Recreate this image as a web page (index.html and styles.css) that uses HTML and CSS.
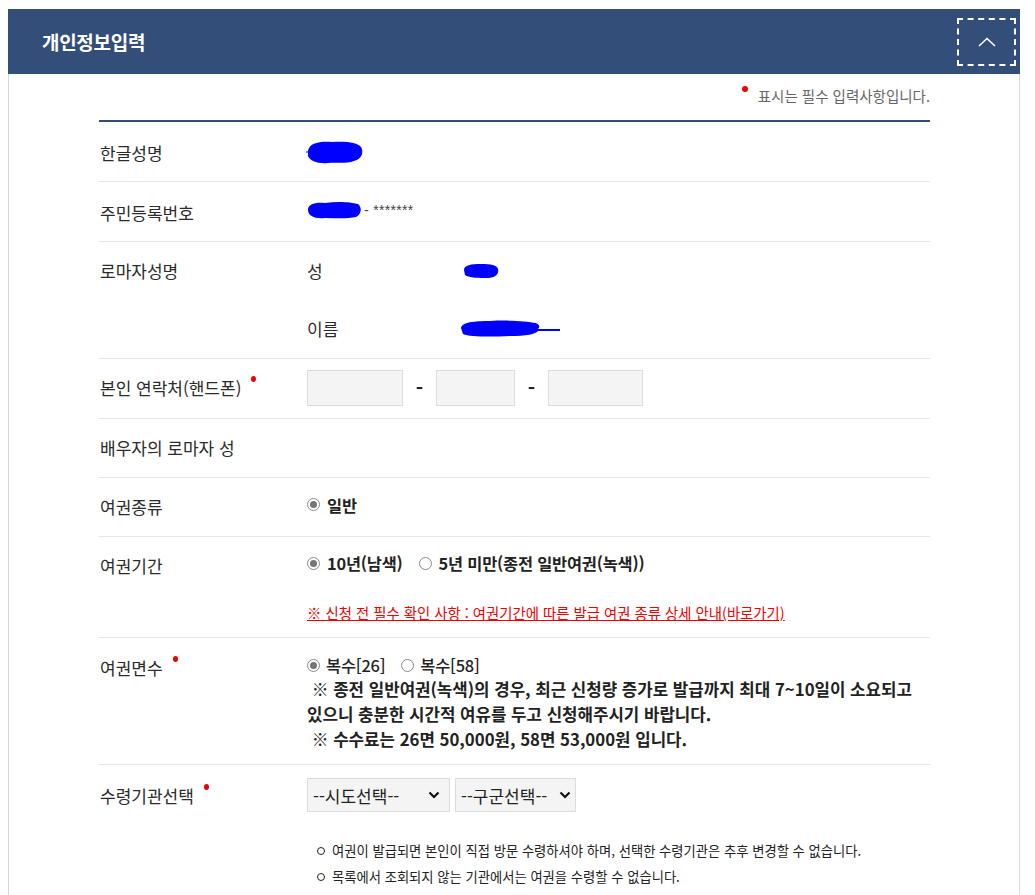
FILE: index.html
```html
<!DOCTYPE html>
<html lang="ko">
<head>
<meta charset="utf-8">
<title>개인정보입력</title>
<link rel="stylesheet" href="styles.css">
</head>
<body>
<div class="panel">
  <div class="panel-head">
    <h2 class="panel-title">개인정보입력</h2>
    <button class="fold-btn" type="button" aria-label="접기">
      <svg width="18" height="10" viewBox="0 0 18 10"><polyline points="1,9 9,1.5 17,9" fill="none" stroke="#fff" stroke-width="1.6"/></svg>
    </button>
  </div>
  <div class="panel-body">
    <p class="req-note"><span class="req-dot"></span>표시는 필수 입력사항입니다.</p>
    <div class="form-table">
      <div class="row r-name">
        <div class="label">한글성명</div>
        <div class="value line">
          <svg class="mask" width="58" height="26" viewBox="0 0 58 26"><path d="M2 12 C3 4 14 2 26 3 C38 2 52 3 55 8 C58 13 56 20 48 22 C40 25 30 23 22 24 C12 25 4 22 2 17 Z" fill="#0000ff"/><path d="M0 13 L6 13" stroke="#0000ff" stroke-width="1"/></svg>
        </div>
      </div>
      <div class="row r-jumin">
        <div class="label">주민등록번호</div>
        <div class="value line">
          <svg class="mask" width="55" height="18" viewBox="0 0 55 18"><path d="M1 9 C1 3 8 1 18 2 C30 0 44 1 51 3 C55 6 55 13 49 16 C40 18 28 17 18 17 C8 18 1 15 1 9 Z" fill="#0000ff"/></svg><span class="jumin-rest">- *******</span>
        </div>
      </div>
      <div class="row r-roman">
        <div class="label">로마자성명</div>
        <div class="value">
          <div class="sub-line">
            <span class="sub-label">성</span>
            <svg class="mask" width="36" height="16" viewBox="0 0 36 16"><path d="M1 7 C1 2 8 1 18 1 C28 1 34 2 35 6 C36 11 33 14 26 15 C16 15 6 15 2 12 Z" fill="#0000ff"/></svg>
          </div>
          <div class="sub-line second">
            <span class="sub-label">이름</span>
            <svg class="mask" width="102" height="18" viewBox="0 0 102 18"><path d="M1 8 C2 2 14 1 30 1 C48 0 66 1 76 3 C80 5 80 7 78 9 L100 9 L100 11 L78 11 C76 14 66 16 50 16 C30 17 10 17 3 14 Z" fill="#0000ff"/></svg>
          </div>
        </div>
      </div>
      <div class="row r-phone">
        <div class="label"><span class="req">본인 연락처(핸드폰)</span></div>
        <div class="value phone">
          <input class="tel w1" type="text" aria-label="휴대폰 앞자리">
          <span class="dash">-</span>
          <input class="tel w2" type="text" aria-label="휴대폰 중간자리">
          <span class="dash">-</span>
          <input class="tel w3" type="text" aria-label="휴대폰 끝자리">
        </div>
      </div>
      <div class="row r-spouse">
        <div class="label">배우자의 로마자 성</div>
        <div class="value"></div>
      </div>
      <div class="row r-kind">
        <div class="label">여권종류</div>
        <div class="value up">
          <span class="opt"><span class="radio on"></span><span class="opt-text">일반</span></span>
        </div>
      </div>
      <div class="row r-period">
        <div class="label">여권기간</div>
        <div class="value up">
          <div class="opts">
            <span class="opt"><span class="radio on"></span><span class="opt-text">10년(남색)</span></span>
            <span class="opt"><span class="radio"></span><span class="opt-text">5년 미만(종전 일반여권(녹색))</span></span>
          </div>
          <a class="red-link" href="#">※ 신청 전 필수 확인 사항 : 여권기간에 따른 발급 여권 종류 상세 안내(바로가기)</a>
        </div>
      </div>
      <div class="row r-pages">
        <div class="label"><span class="req">여권면수</span></div>
        <div class="value up">
          <div class="opts">
            <span class="opt"><span class="radio on"></span><span class="opt-text mid">복수[26]</span></span>
            <span class="opt"><span class="radio"></span><span class="opt-text mid">복수[58]</span></span>
          </div>
          <p class="notice">&nbsp;※ 종전 일반여권(녹색)의 경우, 최근 신청량 증가로 발급까지 최대 7~10일이 소요되고<br>있으니 충분한 시간적 여유를 두고 신청해주시기 바랍니다.<br>&nbsp;※ 수수료는 26면 50,000원, 58면 53,000원 입니다.</p>
        </div>
      </div>
      <div class="row r-office">
        <div class="label"><span class="req">수령기관선택</span></div>
        <div class="value">
          <div class="selects">
            <div class="sel-wrap s1">
              <select aria-label="시도선택"><option>--시도선택--</option></select>
              <svg class="chev" width="12" height="8" viewBox="0 0 12 8"><polyline points="1.5,1.5 6,6 10.5,1.5" fill="none" stroke="#111" stroke-width="2.2"/></svg>
            </div>
            <div class="sel-wrap s2">
              <select aria-label="구군선택"><option>--구군선택--</option></select>
              <svg class="chev" width="12" height="8" viewBox="0 0 12 8"><polyline points="1.5,1.5 6,6 10.5,1.5" fill="none" stroke="#111" stroke-width="2.2"/></svg>
            </div>
          </div>
          <ul class="guide">
            <li>여권이 발급되면 본인이 직접 방문 수령하셔야 하며, 선택한 수령기관은 추후 변경할 수 없습니다.</li>
            <li>목록에서 조회되지 않는 기관에서는 여권을 수령할 수 없습니다.</li>
          </ul>
        </div>
      </div>
    </div>
  </div>
</div>
</body>
</html>
```

FILE: styles.css
```css
* { box-sizing: border-box; }

body {
  margin: 0;
  background: #fff;
  font-family: "Noto Sans CJK KR", "Noto Sans", sans-serif;
  color: #333;
}

.panel {
  margin: 9px 0 0 8px;
  width: 1012px;
}

.panel-head {
  height: 65px;
  background: #344e7a;
  display: flex;
  align-items: center;
  justify-content: space-between;
  padding: 0 4px 0 34px;
}

.panel-title {
  margin: 0;
  font-size: 19px;
  font-weight: 700;
  color: #fff;
  letter-spacing: -0.3px;
}

.fold-btn {
  width: 59px;
  height: 48px;
  border: 2px dashed #fff;
  background: transparent;
  display: flex;
  align-items: center;
  justify-content: center;
  padding: 0;
  margin: 0;
}

.panel-body {
  border-left: 1px solid #d6d6d6;
  border-right: 1px solid #d6d6d6;
  padding: 0 89px 0 90px;
}

.req-note {
  margin: 0;
  height: 46px;
  padding-top: 12px;
  text-align: right;
  font-size: 14.5px;
  line-height: 20px;
  color: #666;
}

.req-dot {
  display: inline-block;
  width: 6px;
  height: 6px;
  border-radius: 50%;
  background: #f00000;
  vertical-align: top;
  margin: 0 10px 0 0;
}

.form-table {
  border-top: 2px solid #344e7a;
}

.row {
  display: flex;
  align-items: flex-start;
  border-bottom: 1px solid #e6e6e6;
}

.label {
  width: 208px;
  flex: none;
  padding-left: 1px;
  font-size: 17px;
  line-height: 24px;
  color: #2b2b2b;
}

.value {
  flex: 1;
  font-size: 16px;
  line-height: 24px;
}

.value.line { display: flex; align-items: center; height: 24px; }
.value.up { margin-top: -3px; }

.req::after {
  content: "";
  display: inline-block;
  width: 5px;
  height: 6px;
  border-radius: 50%;
  background: #f00000;
  margin-left: 10px;
  vertical-align: 13px;
}

.mask { display: block; flex: none; }

/* rows */
.r-name { padding: 19px 0 16px; }
.r-name .mask { margin: -3px 0 0 -1px; }

.r-jumin { padding: 19px 0 16px; }
.r-jumin .value { margin-top: -3px; }
.jumin-rest {
  font-size: 14px;
  color: #444;
  margin-left: 2px;
  letter-spacing: 0.3px;
  line-height: 18px;
  font-family: "Liberation Sans", Arial, sans-serif;
}

.r-roman { padding: 17px 0 17px; }
.sub-line {
  display: flex;
  align-items: center;
  height: 24px;
}
.sub-line.second { margin-top: 34px; }
.sub-label {
  width: 156px;
  flex: none;
  font-size: 17px;
  color: #2b2b2b;
}
.sub-line.second .mask { margin-left: -3px; }

.r-phone { padding: 11px 0 12px; }
.r-phone .label { line-height: 36px; }
.phone { display: flex; align-items: center; }
.tel {
  height: 36px;
  border: 1px solid #dcdcdc;
  background: #f4f4f4;
  margin: 0;
  padding: 0 6px;
  font-size: 15px;
}
.tel.w1 { width: 96px; }
.tel.w2 { width: 79px; }
.tel.w3 { width: 95px; }
.dash {
  width: 33px;
  text-align: center;
  font-size: 20px;
  font-weight: 700;
  color: #222;
  line-height: 36px;
}

.r-spouse { padding: 17px 0 17px; }
.r-kind { padding: 17px 0 17px; }
.r-period { padding: 17px 0 13px; }
.r-pages { padding: 18px 0 12px; }
.r-office { padding: 13px 0 6px; }
.r-office .label { margin-top: 6px; }

/* radios */
.opts { display: flex; align-items: center; height: 24px; }
.opt {
  display: inline-flex;
  align-items: center;
  margin-right: 16px;
}
.radio {
  width: 13px;
  height: 13px;
  border: 1px solid #8a8a8a;
  border-radius: 50%;
  background: #fff;
  position: relative;
  flex: none;
}
.radio.on::after {
  content: "";
  position: absolute;
  left: 2px;
  top: 2px;
  width: 7px;
  height: 7px;
  border-radius: 50%;
  background: #747474;
}
.opt-text {
  margin-left: 7px;
  font-size: 16.4px;
  font-weight: 700;
  color: #222;
  letter-spacing: -0.2px;
}
.opt-text.mid { font-weight: 500; margin-left: 6px; }
.r-kind .opt { height: 24px; }

.red-link {
  display: inline-block;
  margin-top: 28px;
  font-size: 14.4px;
  line-height: 20px;
  color: #f00000;
  text-decoration: underline;
}

.notice {
  margin: 0;
  font-size: 16.8px;
  line-height: 25px;
  font-weight: 700;
  color: #222;
}

/* selects */
.selects { display: flex; gap: 5px; }
.sel-wrap { position: relative; height: 34px; }
.sel-wrap select {
  appearance: none;
  -webkit-appearance: none;
  height: 34px;
  border: 1px solid #dcdcdc;
  background: #f4f4f4;
  font-family: "Noto Sans CJK KR", sans-serif;
  font-size: 17px;
  color: #222;
  padding: 0 0 0 5px;
  margin: 0;
}
.s1 select { width: 143px; }
.s2 select { width: 121px; }
.chev { position: absolute; top: 13px; pointer-events: none; }
.s1 .chev { right: 10px; }
.s2 .chev { right: 5px; }

.guide {
  list-style: none;
  margin: 26px 0 0;
  padding: 0 0 0 10px;
}
.guide li {
  font-size: 13.3px;
  line-height: 26px;
  color: #222;
  display: flex;
  align-items: center;
}
.guide li::before {
  content: "";
  width: 6px;
  height: 6px;
  border: 1.4px solid #222;
  border-radius: 50%;
  margin-right: 7px;
  flex: none;
}
```
